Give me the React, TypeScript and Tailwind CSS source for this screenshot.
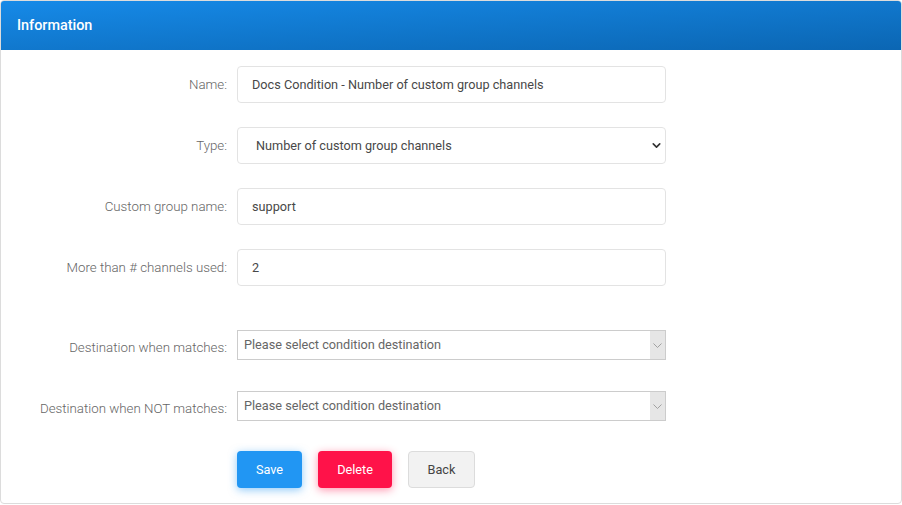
import { ChevronDown } from "lucide-react";

function Row({
  label,
  children,
  className = "",
  labelClass = "",
}: {
  label: string;
  children: React.ReactNode;
  className?: string;
  labelClass?: string;
}) {
  return (
    <div className={`flex items-center ${className}`}>
      <label className={`w-[226px] shrink-0 text-right text-[13.3px] font-light text-[#666] ${labelClass}`}>{label}</label>
      <div className="ml-[10px] w-[429px]">{children}</div>
    </div>
  );
}

function TextInput({ value }: { value: string }) {
  return (
    <input
      defaultValue={value}
      className="h-[37px] w-full rounded border border-[#e3e3e3] bg-white px-[14px] text-[12.7px] text-[#484848] outline-none"
    />
  );
}

function DestSelect() {
  return (
    <div className="flex h-[30px] w-full border border-[#ccc] bg-white">
      <div className="flex flex-1 items-center px-[6px] text-[12.7px] text-[#666]">
        Please select condition destination
      </div>
      <div className="flex w-[15px] items-center justify-center bg-[#e6e6e6]">
        <svg width="9" height="5" viewBox="0 0 9 5" fill="none">
          <path d="M0.5 0.5 L4.5 4.5 L8.5 0.5" stroke="#999" strokeWidth="0.9" />
        </svg>
      </div>
    </div>
  );
}

export default function App() {
  return (
    <div className="h-[505px] w-[902px] bg-white font-['Roboto',sans-serif]">
      <div className="h-[504px] overflow-hidden rounded border border-[#dcdcdc] bg-white">
        <div className="flex h-[49px] items-center bg-gradient-to-br from-[#168ae8] to-[#0b66b3] px-4 text-[14.4px] font-medium text-white">
          Information
        </div>
        <div className="pt-[16px]">
          <Row label="Name:">
            <TextInput value="Docs Condition - Number of custom group channels" />
          </Row>
          <Row label="Type:" className="mt-[24px]">
            <div className="relative">
              <div className="flex h-[37px] w-full items-center rounded border border-[#e3e3e3] bg-white pl-[18px] text-[12.7px] text-[#484848]">
                Number of custom group channels
              </div>
              <ChevronDown className="absolute right-[3px] top-[12px] h-[13px] w-[13px] text-[#333]" strokeWidth={3} />
            </div>
          </Row>
          <Row label="Custom group name:" className="mt-[24px]">
            <TextInput value="support" />
          </Row>
          <Row label="More than # channels used:" className="mt-[24px]">
            <TextInput value="2" />
          </Row>
          <Row label="Destination when matches:" className="mt-[44px]" labelClass="pt-[6px]">
            <DestSelect />
          </Row>
          <Row label="Destination when NOT matches:" className="mt-[31px]" labelClass="pt-[6px]">
            <DestSelect />
          </Row>
          <div className="ml-[236px] mt-[30px] flex gap-[16px]">
            <button className="h-[37px] w-[65px] rounded-sm bg-[#2196f3] text-[12.7px] text-white shadow-[0_2px_8px_rgba(33,150,243,0.5)]">
              Save
            </button>
            <button className="h-[37px] w-[74px] rounded-sm bg-[#ff1249] text-[12.7px] text-white shadow-[0_2px_8px_rgba(255,18,73,0.45)]">
              Delete
            </button>
            <button className="h-[37px] w-[67px] rounded-sm border border-[#dcdcdc] bg-[#f2f2f2] text-[12.7px] text-[#444]">
              Back
            </button>
          </div>
        </div>
      </div>
    </div>
  );
}
